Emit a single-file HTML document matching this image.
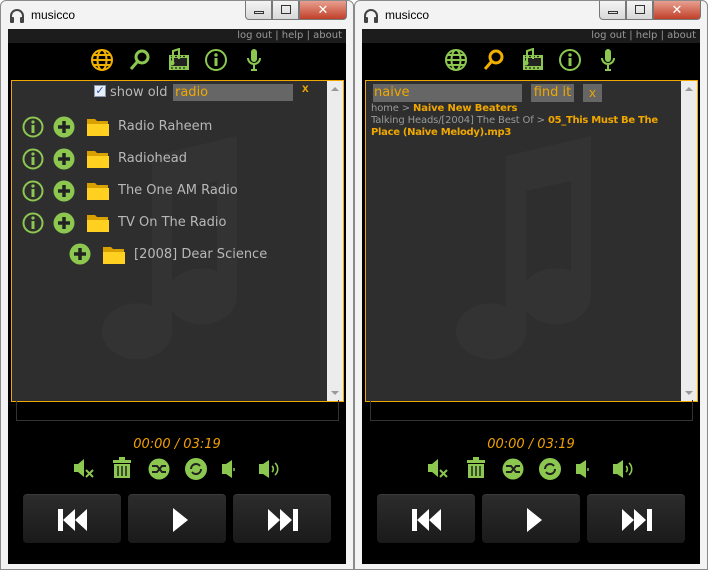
<!DOCTYPE html>
<html><head><meta charset="utf-8"><style>
*{margin:0;padding:0;box-sizing:border-box}
body{width:708px;height:570px;background:#fff;font-family:"Liberation Sans","DejaVu Sans",sans-serif;position:relative;overflow:hidden}
.win{position:absolute;top:0;width:354px;height:570px;background:#f3f3f3;border:1px solid #8a8a8a;border-radius:6px 6px 0 0}
.title{position:absolute;left:30px;top:7px;font-size:12px;color:#000}
.hp{position:absolute;left:8px;top:7px}
.ctl{position:absolute;top:0;height:19px;border:1px solid #777;border-top:none;background:linear-gradient(#f4f4f4,#d8d8d8)}
.content{position:absolute;left:7px;top:28px;width:338px;height:535px;background:#000}
.links{position:absolute;left:0;top:0;width:338px;height:14px;background:#1c1c1c;color:#999;font-size:10px;text-align:right;padding-right:4px;line-height:14px;font-family:"DejaVu Sans",sans-serif}
.nav{position:absolute;top:19px}
.panel{position:absolute;left:3px;top:51px;width:333px;height:322px;background:#2e2e2e;border:1px solid #f0a800}
.sb{position:absolute;right:0;top:0;width:16px;height:320px;background:#ececec}
.row{position:absolute;font-size:13px;color:#b8b8b8;font-family:"DejaVu Sans",sans-serif}
.box2{position:absolute;left:8px;top:372px;width:323px;height:21px;border:1px solid #333;border-top:none}
.time{position:absolute;left:0;width:338px;top:409px;text-align:center;color:#f0a000;font-style:italic;font-size:13px;font-family:"DejaVu Sans",sans-serif}
.btn{position:absolute;top:466px;width:98px;height:49px;background:linear-gradient(#2c2c2c,#1a1a1a);border-radius:4px;border-top:1px solid #3a3a3a}
.btn svg{position:absolute;left:33px;top:12px}
.ic{position:absolute}
</style></head><body>

<div class="win" style="left:0">
 <svg class="hp" width="16" height="16" viewBox="0 0 16 16"><path d="M2 10V8a6 6 0 0 1 12 0v2" stroke="#444" stroke-width="2" fill="none"/><rect x="1" y="9" width="4" height="6" rx="1" fill="#444"/><rect x="11" y="9" width="4" height="6" rx="1" fill="#444"/></svg>
 <div class="title">musicco</div>
 <div class="ctl" style="left:244px;width:27px;border-radius:0 0 0 4px"><div style="position:absolute;left:8px;top:10px;width:10px;height:3px;border:1px solid #333"></div></div>
 <div class="ctl" style="left:271px;width:27px"><div style="position:absolute;left:8px;top:4px;width:10px;height:9px;border:1px solid #333"></div></div>
 <div class="ctl" style="left:298px;width:48px;background:linear-gradient(#e8a090,#c0402a);border-radius:0 0 4px 0;color:#fff;text-align:center;font-weight:bold;font-size:13px;line-height:17px">✕</div>
 <div class="content">
  <div class="links">log out | help | about</div>
  <svg class="nav" style="left:82px" width="24" height="24" viewBox="0 0 24 24"><g stroke="#f0b000" stroke-width="2" fill="none"><circle cx="12" cy="12" r="10"/><ellipse cx="12" cy="12" rx="4.5" ry="10"/><path d="M2 12h20M4 7h16M4 17h16"/></g></svg>
  <svg class="nav" style="left:120px" width="24" height="24" viewBox="0 0 24 24"><g stroke="#8cc850" stroke-width="3" fill="none"><circle cx="14" cy="9" r="6"/><path d="M10 13L3 21"/></g></svg>
  <svg class="nav" style="left:158px" width="24" height="24" viewBox="0 0 24 24"><rect x="3" y="7" width="20" height="15" fill="#8cc850"/><rect x="5" y="10" width="16" height="8" fill="#222"/><path d="M5 8.5h2M9 8.5h2M13 8.5h2M17 8.5h2M5 20h2M9 20h2M13 20h2M17 20h2" stroke="#222" stroke-width="1.2"/><path d="M7 15V3l6-2v10" stroke="#8cc850" stroke-width="2" fill="none"/><circle cx="6" cy="15" r="2.5" fill="#8cc850"/></svg>
  <svg class="nav" style="left:196px" width="24" height="24" viewBox="0 0 24 24"><circle cx="12" cy="12" r="10" stroke="#8cc850" stroke-width="2" fill="none"/><rect x="10.5" y="10" width="3" height="8" fill="#8cc850"/><circle cx="12" cy="7" r="1.7" fill="#8cc850"/></svg>
  <svg class="nav" style="left:234px" width="24" height="24" viewBox="0 0 24 24"><rect x="9" y="1" width="6" height="13" rx="3" fill="#8cc850"/><path d="M6 10a6 6 0 0 0 12 0M12 16v5M9 22h6" stroke="#8cc850" stroke-width="2" fill="none"/></svg>
  <div class="panel">
   <svg style="position:absolute;left:85px;top:55px" width="150" height="230" viewBox="0 0 150 230"><path d="M55 20L140 0v160a35 28 0 1 1-20-25V45L75 55v140a35 28 0 1 1-20-25z" fill="#333"/></svg>
   <div class="sb"><div style="position:absolute;left:4px;top:6px;border:4px solid transparent;border-bottom-color:#999;border-top:none"></div><div style="position:absolute;left:4px;bottom:6px;border:4px solid transparent;border-top-color:#999;border-bottom:none"></div></div>
   <div style="position:absolute;left:82px;top:4px;width:12px;height:12px;background:#e8eef8;border:1px solid #8899aa;color:#2050a0;font-size:11px;line-height:10px;text-align:center">✓</div>
   <div class="row" style="left:98px;top:4px;font-size:13px">show old</div>
   <div style="position:absolute;left:161px;top:3px;width:120px;height:17px;background:#666;color:#f0a800;font-size:13px;padding-left:2px;line-height:17px;font-family:'DejaVu Sans',sans-serif">radio</div>
   <div style="position:absolute;left:290px;top:0px;color:#f0a800;font-size:12px;font-weight:bold">x</div>
  </div>
 </div>
</div>

<div class="win" style="left:354px">
 <svg class="hp" width="16" height="16" viewBox="0 0 16 16"><path d="M2 10V8a6 6 0 0 1 12 0v2" stroke="#444" stroke-width="2" fill="none"/><rect x="1" y="9" width="4" height="6" rx="1" fill="#444"/><rect x="11" y="9" width="4" height="6" rx="1" fill="#444"/></svg>
 <div class="title">musicco</div>
 <div class="ctl" style="left:244px;width:27px;border-radius:0 0 0 4px"><div style="position:absolute;left:8px;top:10px;width:10px;height:3px;border:1px solid #333"></div></div>
 <div class="ctl" style="left:271px;width:27px"><div style="position:absolute;left:8px;top:4px;width:10px;height:9px;border:1px solid #333"></div></div>
 <div class="ctl" style="left:298px;width:48px;background:linear-gradient(#e8a090,#c0402a);border-radius:0 0 4px 0;color:#fff;text-align:center;font-weight:bold;font-size:13px;line-height:17px">✕</div>
 <div class="content">
  <div class="links">log out | help | about</div>
  <svg class="nav" style="left:82px" width="24" height="24" viewBox="0 0 24 24"><g stroke="#8cc850" stroke-width="2" fill="none"><circle cx="12" cy="12" r="10"/><ellipse cx="12" cy="12" rx="4.5" ry="10"/><path d="M2 12h20M4 7h16M4 17h16"/></g></svg>
  <svg class="nav" style="left:120px" width="24" height="24" viewBox="0 0 24 24"><g stroke="#f0b000" stroke-width="3" fill="none"><circle cx="14" cy="9" r="6"/><path d="M10 13L3 21"/></g></svg>
  <svg class="nav" style="left:158px" width="24" height="24" viewBox="0 0 24 24"><rect x="3" y="7" width="20" height="15" fill="#8cc850"/><rect x="5" y="10" width="16" height="8" fill="#222"/><path d="M5 8.5h2M9 8.5h2M13 8.5h2M17 8.5h2M5 20h2M9 20h2M13 20h2M17 20h2" stroke="#222" stroke-width="1.2"/><path d="M7 15V3l6-2v10" stroke="#8cc850" stroke-width="2" fill="none"/><circle cx="6" cy="15" r="2.5" fill="#8cc850"/></svg>
  <svg class="nav" style="left:196px" width="24" height="24" viewBox="0 0 24 24"><circle cx="12" cy="12" r="10" stroke="#8cc850" stroke-width="2" fill="none"/><rect x="10.5" y="10" width="3" height="8" fill="#8cc850"/><circle cx="12" cy="7" r="1.7" fill="#8cc850"/></svg>
  <svg class="nav" style="left:234px" width="24" height="24" viewBox="0 0 24 24"><rect x="9" y="1" width="6" height="13" rx="3" fill="#8cc850"/><path d="M6 10a6 6 0 0 0 12 0M12 16v5M9 22h6" stroke="#8cc850" stroke-width="2" fill="none"/></svg>
  <div class="panel">
   <svg style="position:absolute;left:85px;top:55px" width="150" height="230" viewBox="0 0 150 230"><path d="M55 20L140 0v160a35 28 0 1 1-20-25V45L75 55v140a35 28 0 1 1-20-25z" fill="#333"/></svg>
   <div class="sb"><div style="position:absolute;left:4px;top:6px;border:4px solid transparent;border-bottom-color:#999;border-top:none"></div><div style="position:absolute;left:4px;bottom:6px;border:4px solid transparent;border-top-color:#999;border-bottom:none"></div></div>
   <div style="position:absolute;left:7px;top:3px;width:149px;height:18px;background:#666;color:#f0a800;font-size:13px;line-height:18px;padding-left:1px;font-family:'DejaVu Sans',sans-serif">naive</div>
   <div style="position:absolute;left:165px;top:3px;width:43px;height:18px;background:#666;color:#f0a800;font-size:13px;line-height:18px;text-align:center;font-family:'DejaVu Sans',sans-serif">find it</div>
   <div style="position:absolute;left:217px;top:3px;width:19px;height:18px;background:#666;color:#f0a800;font-size:13px;line-height:17px;text-align:center">x</div>
   <div style="position:absolute;left:5px;top:22px;width:312px;font-size:10px;letter-spacing:-0.15px;line-height:12px;color:#999;font-family:'DejaVu Sans',sans-serif">home &gt; <b style="color:#f0a800">Naive New Beaters</b><br>Talking Heads/[2004] The Best Of &gt; <b style="color:#f0a800;letter-spacing:-0.3px">05_This Must Be The Place (Naive Melody).mp3</b></div>
  </div>
 </div>
</div>

<svg class="ic" style="left:22px;top:116px" width="22" height="22" viewBox="0 0 22 22"><circle cx="11" cy="11" r="9.5" stroke="#8cc850" stroke-width="2" fill="none"/><rect x="9.5" y="9" width="3" height="8" fill="#8cc850"/><circle cx="11" cy="6" r="1.6" fill="#8cc850"/></svg>
<svg class="ic" style="left:53px;top:116px" width="22" height="22" viewBox="0 0 22 22"><circle cx="11" cy="11" r="10.5" fill="#8cc850"/><path d="M11 5v12M5 11h12" stroke="#222" stroke-width="3.5"/></svg>
<svg class="ic" style="left:86px;top:117px" width="24" height="20" viewBox="0 0 24 20"><path d="M1 2h8l2 2h11v15H1z" fill="#d8a000"/><path d="M1 7h22v12H1z" fill="#ffd020"/></svg>
<div class="row" style="left:118px;top:119px">Radio Raheem</div>

<svg class="ic" style="left:22px;top:148px" width="22" height="22" viewBox="0 0 22 22"><circle cx="11" cy="11" r="9.5" stroke="#8cc850" stroke-width="2" fill="none"/><rect x="9.5" y="9" width="3" height="8" fill="#8cc850"/><circle cx="11" cy="6" r="1.6" fill="#8cc850"/></svg>
<svg class="ic" style="left:53px;top:148px" width="22" height="22" viewBox="0 0 22 22"><circle cx="11" cy="11" r="10.5" fill="#8cc850"/><path d="M11 5v12M5 11h12" stroke="#222" stroke-width="3.5"/></svg>
<svg class="ic" style="left:86px;top:149px" width="24" height="20" viewBox="0 0 24 20"><path d="M1 2h8l2 2h11v15H1z" fill="#d8a000"/><path d="M1 7h22v12H1z" fill="#ffd020"/></svg>
<div class="row" style="left:118px;top:151px">Radiohead</div>

<svg class="ic" style="left:22px;top:180px" width="22" height="22" viewBox="0 0 22 22"><circle cx="11" cy="11" r="9.5" stroke="#8cc850" stroke-width="2" fill="none"/><rect x="9.5" y="9" width="3" height="8" fill="#8cc850"/><circle cx="11" cy="6" r="1.6" fill="#8cc850"/></svg>
<svg class="ic" style="left:53px;top:180px" width="22" height="22" viewBox="0 0 22 22"><circle cx="11" cy="11" r="10.5" fill="#8cc850"/><path d="M11 5v12M5 11h12" stroke="#222" stroke-width="3.5"/></svg>
<svg class="ic" style="left:86px;top:181px" width="24" height="20" viewBox="0 0 24 20"><path d="M1 2h8l2 2h11v15H1z" fill="#d8a000"/><path d="M1 7h22v12H1z" fill="#ffd020"/></svg>
<div class="row" style="left:118px;top:183px">The One AM Radio</div>

<svg class="ic" style="left:22px;top:212px" width="22" height="22" viewBox="0 0 22 22"><circle cx="11" cy="11" r="9.5" stroke="#8cc850" stroke-width="2" fill="none"/><rect x="9.5" y="9" width="3" height="8" fill="#8cc850"/><circle cx="11" cy="6" r="1.6" fill="#8cc850"/></svg>
<svg class="ic" style="left:53px;top:212px" width="22" height="22" viewBox="0 0 22 22"><circle cx="11" cy="11" r="10.5" fill="#8cc850"/><path d="M11 5v12M5 11h12" stroke="#222" stroke-width="3.5"/></svg>
<svg class="ic" style="left:86px;top:213px" width="24" height="20" viewBox="0 0 24 20"><path d="M1 2h8l2 2h11v15H1z" fill="#d8a000"/><path d="M1 7h22v12H1z" fill="#ffd020"/></svg>
<div class="row" style="left:118px;top:215px">TV On The Radio</div>

<svg class="ic" style="left:69px;top:243px" width="22" height="22" viewBox="0 0 22 22"><circle cx="11" cy="11" r="10.5" fill="#8cc850"/><path d="M11 5v12M5 11h12" stroke="#222" stroke-width="3.5"/></svg>
<svg class="ic" style="left:102px;top:245px" width="24" height="20" viewBox="0 0 24 20"><path d="M1 2h8l2 2h11v15H1z" fill="#d8a000"/><path d="M1 7h22v12H1z" fill="#ffd020"/></svg>
<div class="row" style="left:134px;top:247px">[2008] Dear Science</div>

<div style="position:absolute;left:8px;top:28px;width:338px;height:535px">
 <div class="box2"></div>
 <div class="time">00:00 / 03:19</div>
 <div class="btn" style="left:15px"><svg width="34" height="26" viewBox="0 0 34 26"><path d="M2 2h5v22H2zM7 13L19 2v22zM19 13L31 2v22z" fill="#fff"/></svg></div>
 <div class="btn" style="left:120px"><svg width="34" height="26" viewBox="0 0 34 26"><path d="M12 1l15 12-15 12z" fill="#fff"/></svg></div>
 <div class="btn" style="left:225px"><svg width="34" height="26" viewBox="0 0 34 26"><path d="M2 2l12 11-12 11zM14 2l12 11-12 11zM27 2h5v22h-5z" fill="#fff"/></svg></div>
</div>
<div style="position:absolute;left:362px;top:28px;width:338px;height:535px">
 <div class="box2"></div>
 <div class="time">00:00 / 03:19</div>
 <div class="btn" style="left:15px"><svg width="34" height="26" viewBox="0 0 34 26"><path d="M2 2h5v22H2zM7 13L19 2v22zM19 13L31 2v22z" fill="#fff"/></svg></div>
 <div class="btn" style="left:120px"><svg width="34" height="26" viewBox="0 0 34 26"><path d="M12 1l15 12-15 12z" fill="#fff"/></svg></div>
 <div class="btn" style="left:225px"><svg width="34" height="26" viewBox="0 0 34 26"><path d="M2 2l12 11-12 11zM14 2l12 11-12 11zM27 2h5v22h-5z" fill="#fff"/></svg></div>
</div>

<div style="position:absolute;left:0;top:0">
 <svg class="ic" style="left:73px;top:458px" width="24" height="22" viewBox="0 0 24 22"><path d="M1 6h4l6-5v18l-6-5H1z" fill="#8cc850"/><path d="M13 12l7 7M20 12l-7 7" stroke="#8cc850" stroke-width="2"/></svg>
 <svg class="ic" style="left:112px;top:457px" width="20" height="22" viewBox="0 0 20 22"><rect x="1" y="3" width="18" height="3" fill="#8cc850"/><rect x="7" y="0" width="6" height="3" fill="#8cc850"/><path d="M2 7h16v14H2z" fill="#8cc850"/><path d="M6 9v10M10 9v10M14 9v10" stroke="#222" stroke-width="1.5"/></svg>
 <svg class="ic" style="left:148px;top:458px" width="22" height="22" viewBox="0 0 22 22"><circle cx="11" cy="11" r="10.5" fill="#8cc850"/><path d="M4 8h5l5 6h4M4 14h5l5-6h4" stroke="#222" stroke-width="2" fill="none"/></svg>
 <svg class="ic" style="left:185px;top:458px" width="22" height="22" viewBox="0 0 22 22"><circle cx="11" cy="11" r="10" stroke="#8cc850" stroke-width="2" fill="#8cc850"/><path d="M6 11a5 5 0 0 1 9-3M16 11a5 5 0 0 1-9 3" stroke="#222" stroke-width="2" fill="none"/></svg>
 <svg class="ic" style="left:221px;top:459px" width="18" height="20" viewBox="0 0 18 20"><path d="M1 5h4l6-4v18l-6-4H1z" fill="#8cc850"/><path d="M13 9v3" stroke="#8cc850" stroke-width="1.5"/></svg>
 <svg class="ic" style="left:258px;top:459px" width="24" height="20" viewBox="0 0 24 20"><path d="M1 5h4l6-4v18l-6-4H1z" fill="#8cc850"/><path d="M14 7a4 4 0 0 1 0 6M17 4a8 8 0 0 1 0 12" stroke="#8cc850" stroke-width="1.6" fill="none"/></svg>
</div>
<div style="position:absolute;left:354px;top:0">
 <svg class="ic" style="left:73px;top:458px" width="24" height="22" viewBox="0 0 24 22"><path d="M1 6h4l6-5v18l-6-5H1z" fill="#8cc850"/><path d="M13 12l7 7M20 12l-7 7" stroke="#8cc850" stroke-width="2"/></svg>
 <svg class="ic" style="left:112px;top:457px" width="20" height="22" viewBox="0 0 20 22"><rect x="1" y="3" width="18" height="3" fill="#8cc850"/><rect x="7" y="0" width="6" height="3" fill="#8cc850"/><path d="M2 7h16v14H2z" fill="#8cc850"/><path d="M6 9v10M10 9v10M14 9v10" stroke="#222" stroke-width="1.5"/></svg>
 <svg class="ic" style="left:148px;top:458px" width="22" height="22" viewBox="0 0 22 22"><circle cx="11" cy="11" r="10.5" fill="#8cc850"/><path d="M4 8h5l5 6h4M4 14h5l5-6h4" stroke="#222" stroke-width="2" fill="none"/></svg>
 <svg class="ic" style="left:185px;top:458px" width="22" height="22" viewBox="0 0 22 22"><circle cx="11" cy="11" r="10" stroke="#8cc850" stroke-width="2" fill="#8cc850"/><path d="M6 11a5 5 0 0 1 9-3M16 11a5 5 0 0 1-9 3" stroke="#222" stroke-width="2" fill="none"/></svg>
 <svg class="ic" style="left:221px;top:459px" width="18" height="20" viewBox="0 0 18 20"><path d="M1 5h4l6-4v18l-6-4H1z" fill="#8cc850"/><path d="M13 9v3" stroke="#8cc850" stroke-width="1.5"/></svg>
 <svg class="ic" style="left:258px;top:459px" width="24" height="20" viewBox="0 0 24 20"><path d="M1 5h4l6-4v18l-6-4H1z" fill="#8cc850"/><path d="M14 7a4 4 0 0 1 0 6M17 4a8 8 0 0 1 0 12" stroke="#8cc850" stroke-width="1.6" fill="none"/></svg>
</div>
</body></html>
